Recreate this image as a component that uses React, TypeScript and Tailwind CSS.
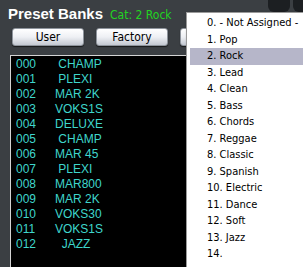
import React from "react";

const presets = [
  " CHAMP",
  " PLEXI",
  "MAR 2K",
  "VOKS1S",
  "DELUXE",
  " CHAMP",
  "MAR 45",
  " PLEXI",
  "MAR800",
  "MAR 2K",
  "VOKS30",
  "VOKS1S",
  "  JAZZ",
];

const categories = [
  "0. - Not Assigned -",
  "1. Pop",
  "2. Rock",
  "3. Lead",
  "4. Clean",
  "5. Bass",
  "6. Chords",
  "7. Reggae",
  "8. Classic",
  "9. Spanish",
  "10. Electric",
  "11. Dance",
  "12. Soft",
  "13. Jazz",
  "14.",
];

const winFont = { fontFamily: "'DejaVu Sans Condensed', 'DejaVu Sans', sans-serif", fontStretch: "condensed" };

function BankButton({ label }: { label?: string }) {
  return (
    <button
      className="h-[18px] w-[72px] rounded-[3px] border border-[#8e949c] bg-gradient-to-b from-[#ffffff] via-[#eef0f4] to-[#c4c9d2] text-[12px] leading-none text-black shadow-[0_1px_1px_rgba(0,0,0,0.6)]"
      style={winFont}
    >
      {label}
    </button>
  );
}

export default function App() {
  const selected = 2;
  return (
    <div className="relative h-[267px] w-[303px] overflow-hidden bg-[#3b3f43]">
      <div className="flex h-[24px] items-baseline gap-[7px] pl-[8px] pt-[3px]">
        <span className="text-[15px] font-bold text-white" style={{ fontFamily: "'Liberation Sans', Arial, sans-serif" }}>
          Preset Banks
        </span>
        <span className="text-[12px] text-[#22d422]" style={winFont}>
          Cat: 2 Rock
        </span>
      </div>

      <div className="mt-[4px] flex gap-3 pl-3">
        <BankButton label="User" />
        <BankButton label="Factory" />
        {/* third button sits under the open dropdown */}
        <BankButton />
      </div>

      <div
        className="ml-[10px] mt-[9px] h-[213px] w-[200px] border border-[#d4d4d4] bg-black pt-[1px] text-[12px] text-[#3fd6cc]"
        style={{ fontFamily: "'Liberation Sans', Arial, sans-serif" }}
      >
        {presets.map((name, i) => (
          <div key={i} className="flex h-[15px] items-center pl-[5px] leading-[15px]">
            <span className="w-[39px]">{String(i).padStart(3, "0")}</span>
            <span className="whitespace-pre">{name}</span>
          </div>
        ))}
      </div>

      <div className="absolute right-[-20px] top-0 flex gap-[3px]">
        <div className="h-[12px] w-[22px] rounded-b-[6px] bg-[#1c1f22]" />
        <div className="h-[12px] w-[30px] rounded-b-[6px] bg-[#1c1f22]" />
      </div>

      <div
        className="absolute left-[186px] top-[12px] h-[270px] w-[130px] border border-[#9a9a9a] bg-white px-[3px] pt-[2px] text-[11px] text-black shadow-[1px_1px_2px_rgba(0,0,0,0.5)]"
        style={winFont}
      >
        {categories.map((c, i) => (
          <div
            key={c}
            className={
              i === selected
                ? "flex h-[16.5px] items-center bg-[#b6b6c9] pl-[17px]"
                : "flex h-[16.5px] items-center pl-[17px]"
            }
          >
            {c}
          </div>
        ))}
      </div>
    </div>
  );
}
